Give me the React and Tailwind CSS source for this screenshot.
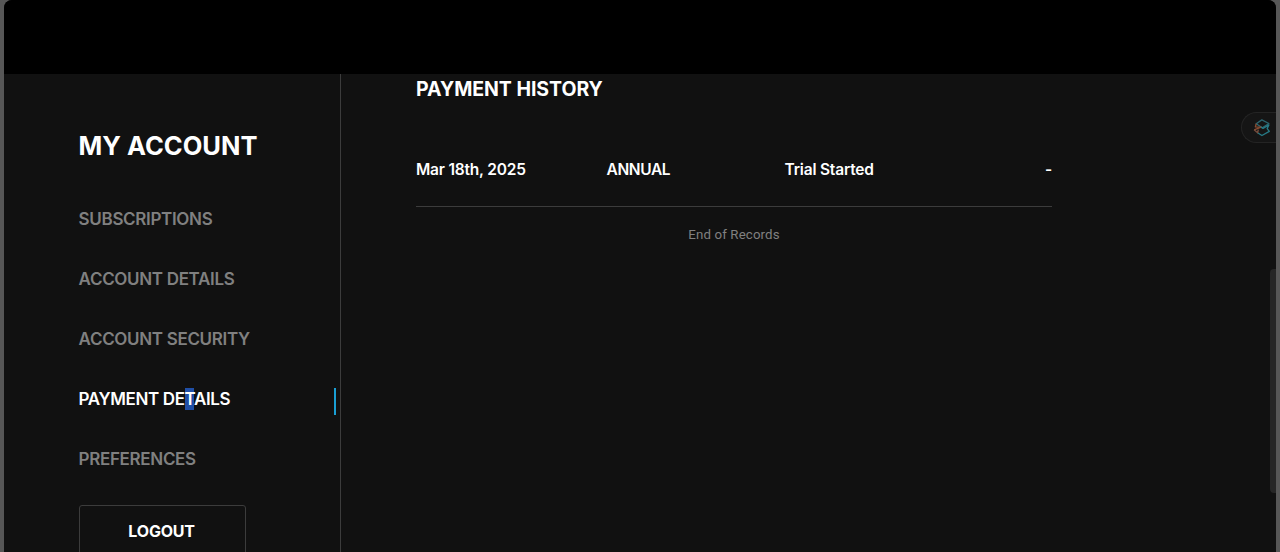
const NAV_ITEMS = [
  { id: 'subscriptions', label: 'SUBSCRIPTIONS' },
  { id: 'details', label: 'ACCOUNT DETAILS' },
  { id: 'security', label: 'ACCOUNT SECURITY' },
  { id: 'payment', label: 'PAYMENT DETAILS', active: true },
  { id: 'preferences', label: 'PREFERENCES' },
];

const PAYMENTS = [
  { date: 'Mar 18th, 2025', plan: 'ANNUAL', status: 'Trial Started', amount: '-' },
];

function NavItem({ item }) {
  if (!item.active) {
    return (
      <li className="h-[60px] whitespace-nowrap text-[17px] font-semibold leading-[22px] tracking-[-0.33px] text-[#808080]">
        {item.label}
      </li>
    );
  }

  return (
    <li className="flex h-[60px] items-start justify-between whitespace-nowrap pr-1 text-[17px] font-semibold leading-[22px] tracking-[-0.38px] text-white">
      <span>
        PAYMENT DE<span className="bg-[#204fa6] py-px">T</span>AILS
      </span>
      <span className="h-[27px] w-[2px] bg-[#1a9fd4]" />
    </li>
  );
}

function Sidebar() {
  return (
    <aside className="flex w-[337px] shrink-0 flex-col border-r border-[#3c3c3c] pl-[74.6px] pt-[55px]">
      <h1 className="whitespace-nowrap text-[25.5px] font-bold leading-[34px] text-white">MY ACCOUNT</h1>
      <ul className="mt-[45px]">
        {NAV_ITEMS.map(item => (
          <NavItem key={item.id} item={item} />
        ))}
      </ul>
      <button className="-mt-[3px] h-[53px] w-[167px] shrink-0 rounded-[3px] border border-[#3c3c3c] pb-0.5 pr-px text-base font-bold tracking-[-0.2px] text-white">
        LOGOUT
      </button>
    </aside>
  );
}

function PaymentHistory() {
  return (
    <section className="ml-[75px] w-[636px] shrink-0">
      <h2 className="text-[19.5px] font-bold leading-[30px] tracking-[-0.05px] text-white">PAYMENT HISTORY</h2>
      {PAYMENTS.map(payment => (
        <div
          key={payment.date}
          className="mt-[54px] grid h-[49px] grid-cols-[190.6px_178px_1fr_auto] border-b border-[#3c3c3c] text-[15.5px] font-semibold leading-6 tracking-[-0.2px] text-white"
        >
          <span>{payment.date}</span>
          <span className="tracking-[-0.4px]">{payment.plan}</span>
          <span>{payment.status}</span>
          <span>{payment.amount}</span>
        </div>
      ))}
      <p className="mt-[18px] text-center font-[Roboto,sans-serif] text-[13.3px] leading-5 tracking-[0.12px] text-[#808080]">End of Records</p>
    </section>
  );
}

// Collapsed extension tab that sticks to the window edge
function ExtensionTab() {
  return (
    <div className="absolute right-0 top-[112px] flex h-[31px] w-[35px] items-center rounded-l-full border border-r-0 border-[#242424] bg-[#151515] pl-[10px]">
      <svg width="19" height="19" viewBox="0 0 18 18" fill="none" strokeWidth="1.3" strokeLinejoin="round">
        <path d="M4 5.4 9.3 1.8 16 5.2 9.8 9.2Z" stroke="#2c6670" />
        <path d="M4 5.4 3.2 8.4 8.6 8.6 2 11.2" stroke="#8a4d32" />
        <path d="M8.6 8.6 10.5 9.8 16 6.6 14.4 10 16.4 12.6 9.4 16.6 5.3 14" stroke="#267985" />
        <path d="M2 11.2 5.3 14 6 11" stroke="#754c3c" />
      </svg>
    </div>
  );
}

export default function App() {
  return (
    <div className="h-[552px] w-[1280px] overflow-hidden bg-[#575757] pl-1 pr-[4px] font-['Inter',sans-serif]">
      <div className="relative flex h-full flex-col overflow-hidden rounded-t-lg bg-[#111111]">
        <header className="h-[74px] shrink-0 bg-black" />
        <main className="flex min-h-0 flex-1">
          <Sidebar />
          <PaymentHistory />
        </main>
        <ExtensionTab />
        <div className="absolute right-0 top-[269px] h-[224px] w-[6px] rounded-l-sm bg-[#262626]" />
      </div>
    </div>
  );
}
